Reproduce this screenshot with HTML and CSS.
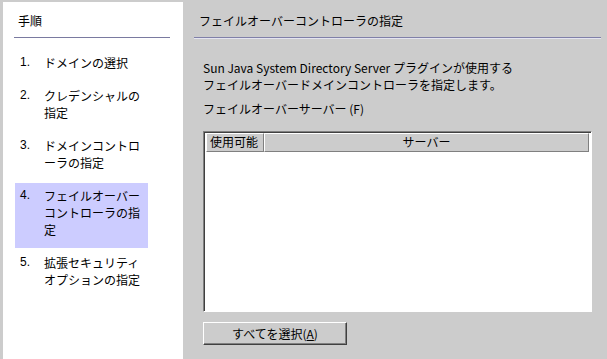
FILE: index.html
```html
<!DOCTYPE html>
<html>
    <head>
        <title>フェイルオーバーコントローラの指定</title>
        <link rel="stylesheet" href="styles.css">
    </head>
    <body>
        <div class="steps">
            <div class="steps-title">手順</div>
            <ol class="step-list">
                <li class="step"><span class="step-num">1.</span><span class="step-text">ドメインの選択</span></li>
                <li class="step"><span class="step-num">2.</span><span class="step-text">クレデンシャルの指定</span></li>
                <li class="step"><span class="step-num">3.</span><span class="step-text">ドメインコントローラの指定</span></li>
                <li class="step current"><span class="step-num">4.</span><span class="step-text">フェイルオーバーコントローラの指定</span></li>
                <li class="step"><span class="step-num">5.</span><span class="step-text">拡張セキュリティオプションの指定</span></li>
            </ol>
        </div>

        <div class="main">
            <div class="main-title">フェイルオーバーコントローラの指定</div>
            <div class="content">
                <p class="description">Sun Java System Directory Server プラグインが使用する<br>フェイルオーバードメインコントローラを指定します。</p>
                <div class="field-label">フェイルオーバーサーバー (F)</div>

                <div class="server-table">
                    <div class="table-head">
                        <div class="head-cell col-enabled">使用可能</div>
                        <div class="head-cell col-server">サーバー</div>
                    </div>
                    <div class="table-body">
                        <!-- no servers yet -->
                    </div>
                </div>

                <button class="select-all">すべてを選択(<u>A</u>)</button>
            </div>
        </div>
    </body>
</html>
```

FILE: styles.css
```css
html, body {
    height: 100%;
}

body {
    margin: 0;
    padding: 2px 0 0 3px;
    box-sizing: border-box;
    background-color: #cccccc;
    font-family: "Noto Sans CJK JP", "Liberation Sans", sans-serif;
    font-size: 12px;
    line-height: 17px;
    color: #000;
    display: flex;
    overflow: hidden;
}

/* left step list */
.steps {
    width: 180px;
    background-color: #fff;
    padding: 10px 13px 0 11px;
    box-sizing: border-box;
}

.steps-title {
    padding: 0 0 8px 4px;
    border-bottom: 1px solid #7a7aa0;
}

.step-list {
    list-style: none;
    margin: 12px 0 0 1px;
    padding: 0;
}

.step {
    display: flex;
    width: 133px;
    padding: 4px 0 10px 5px;
    box-sizing: border-box;
    margin-bottom: 2px;
}

.step.current {
    background-color: #ccccff;
}

.step-num {
    width: 24px;
    flex-shrink: 0;
    font-family: "Liberation Sans", sans-serif;
}

.step-text {
    width: 104px;
}

/* right panel */
.main {
    flex: 1;
    padding: 10px 6px 0 11px;
}

.main-title {
    padding: 0 0 8px 5px;
    border-bottom: 1px solid #8080a8;
    box-shadow: 0 1px 0 #e4e4f0;
}

.content {
    padding-left: 9px;
}

.description {
    margin: 21px 0 0 0;
}

.field-label {
    margin-top: 7px;
}

.server-table {
    margin-top: 14px;
    width: 389px;
    height: 181px;
    background-color: #fff;
    border-top: 1px solid #808080;
    border-left: 1px solid #808080;
    border-right: 1px solid #ffffff;
    border-bottom: 1px solid #ffffff;
    box-shadow: inset 1px 1px 0 #404040;
    box-sizing: border-box;
    padding: 1px 2px 0 2px;
}

.table-head {
    display: flex;
    height: 19px;
}

.head-cell {
    background-color: #cccccc;
    border-top: 1px solid #fff;
    border-left: 1px solid #fff;
    border-right: 1px solid #808080;
    border-bottom: 1px solid #808080;
    box-sizing: border-box;
    line-height: 16px;
}

.col-enabled {
    width: 58px;
    padding-left: 3px;
}

.col-server {
    flex: 1;
    text-align: center;
}

.select-all {
    display: block;
    margin-top: 10px;
    width: 144px;
    height: 23px;
    padding: 0;
    background-color: #cccccc;
    border-top: 1px solid #fff;
    border-left: 1px solid #fff;
    border-right: 1px solid #404040;
    border-bottom: 1px solid #404040;
    box-shadow: inset -1px -1px 0 #808080;
    font-family: "Noto Sans CJK JP", "Liberation Sans", sans-serif;
    font-size: 12px;
    color: #000;
}
```
